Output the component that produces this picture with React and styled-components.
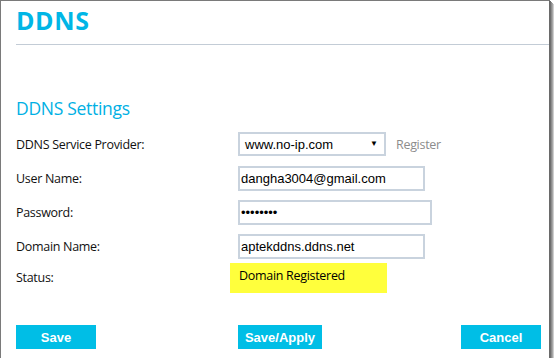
import React from "react";
import styled, { createGlobalStyle } from "styled-components";

const GlobalStyle = createGlobalStyle`
  html, body {
    margin: 0;
    padding: 0;
    background: #ffffff;
  }
  body {
    font-family: "Open Sans", "Liberation Sans", sans-serif;
  }
`;

const Window = styled.div`
  box-sizing: border-box;
  width: 550px;
  height: 358px;
  background: #fff;
  border-top: 1px solid #7a7a7a;
  border-left: 1px solid #7a7a7a;
  border-right: 1px solid #6a6a6a;
  box-shadow: 1px 1px 0 #6e6e6e, 2px 2px 0 #8c8c8c, 3px 3px 0 #a6a6a6,
    4px 4px 0 #cfcfcf;
  display: flex;
  flex-direction: column;
`;

const Header = styled.div`
  padding-left: 15px;
`;

const Title = styled.h1`
  margin: 0;
  height: 44px;
  padding-top: 3px;
  box-sizing: border-box;
  font-family: "Open Sans", sans-serif;
  font-weight: 700;
  font-size: 25px;
  line-height: 33px;
  letter-spacing: 0.6px;
  color: #00b6e6;
  border-bottom: 1px solid #c3ccd6;
`;

const Body = styled.div`
  padding: 0 8px 0 15px;
  display: flex;
  flex-direction: column;
  flex: 1;
`;

const SectionTitle = styled.h2`
  margin: 51px 0 0;
  font-family: "Open Sans", sans-serif;
  font-weight: 400;
  font-size: 17.5px;
  line-height: 24px;
  letter-spacing: -0.3px;
  color: #00b0e4;
`;

const Form = styled.div`
  display: grid;
  grid-template-columns: 222px 1fr;
  grid-auto-rows: auto;
  margin-top: 7px;
`;

const Label = styled.div`
  display: flex;
  align-items: ${(p) => (p.$top ? "flex-start" : "center")};
  padding-top: ${(p) => (p.$top ? "6px" : "0")};
  font-size: 12.5px;
  letter-spacing: -0.3px;
  color: #111;
  height: ${(p) => p.$h || 34}px;
  box-sizing: border-box;
`;

const Cell = styled.div`
  display: flex;
  align-items: ${(p) => (p.$top ? "flex-start" : "center")};
  height: ${(p) => p.$h || 34}px;
  gap: 10px;
`;

const SelectBox = styled.div`
  box-sizing: border-box;
  width: 148px;
  height: 24px;
  border: 2px solid #c9d3de;
  display: flex;
  align-items: center;
  justify-content: space-between;
  padding: 0 6px 0 5px;
  font-family: "Liberation Sans", Arial, sans-serif;
  font-size: 13px;
  color: #000;
`;

const Arrow = styled.span`
  font-size: 8px;
  line-height: 1;
`;

const Link = styled.span`
  font-family: "Open Sans", sans-serif;
  font-size: 12.5px;
  letter-spacing: -0.3px;
  color: #8c8c8c;
`;

const Field = styled.input`
  box-sizing: border-box;
  width: ${(p) => p.$w}px;
  height: 25px;
  border: 2px solid #c9d3de;
  padding: 0 1px;
  margin: 0;
  outline: none;
  font-family: "Liberation Sans", Arial, sans-serif;
  font-size: 13px;
  color: #000;
  background: #fff;
`;

const StatusBox = styled.div`
  box-sizing: border-box;
  margin-left: -8px;
  width: 157px;
  height: 30px;
  background: #ffff3c;
  padding: 4px 0 0 9px;
  font-family: "Open Sans", sans-serif;
  font-size: 12.5px;
  letter-spacing: -0.3px;
  color: #000;
`;

const ButtonBar = styled.div`
  display: flex;
  align-items: center;
  margin-top: auto;
  margin-bottom: 9px;
`;

const Button = styled.button`
  box-sizing: border-box;
  width: ${(p) => p.$w || 80}px;
  height: 24px;
  margin-left: ${(p) => p.$ml || "0"};
  border: none;
  padding: 0;
  background: #00bee6;
  color: #fff;
  font-family: "Liberation Sans", Arial, sans-serif;
  font-weight: 700;
  font-size: 13px;
  cursor: pointer;
`;

export default function App() {
  return (
    <>
      <GlobalStyle />
      <Window>
        <Header>
          <Title>DDNS</Title>
        </Header>
        <Body>
          <SectionTitle>DDNS Settings</SectionTitle>
          <Form>
            <Label>DDNS Service Provider:</Label>
            <Cell>
              <SelectBox>
                <span>www.no-ip.com</span>
                <Arrow>▼</Arrow>
              </SelectBox>
              <Link>Register</Link>
            </Cell>

            <Label>User Name:</Label>
            <Cell>
              <Field $w={187} readOnly defaultValue="dangha3004@gmail.com" />
            </Cell>

            <Label>Password:</Label>
            <Cell>
              <Field $w={194} type="password" readOnly defaultValue="12345678" />
            </Cell>

            <Label>Domain Name:</Label>
            <Cell>
              <Field $w={187} readOnly defaultValue="aptekddns.ddns.net" />
            </Cell>

            <Label $top $h={32}>Status:</Label>
            <Cell $top $h={32}>
              <StatusBox>Domain Registered</StatusBox>
            </Cell>
          </Form>
          <ButtonBar>
            <Button>Save</Button>
            <Button $w={84} $ml="142px">Save/Apply</Button>
            <Button $ml="auto">Cancel</Button>
          </ButtonBar>
        </Body>
      </Window>
    </>
  );
}
